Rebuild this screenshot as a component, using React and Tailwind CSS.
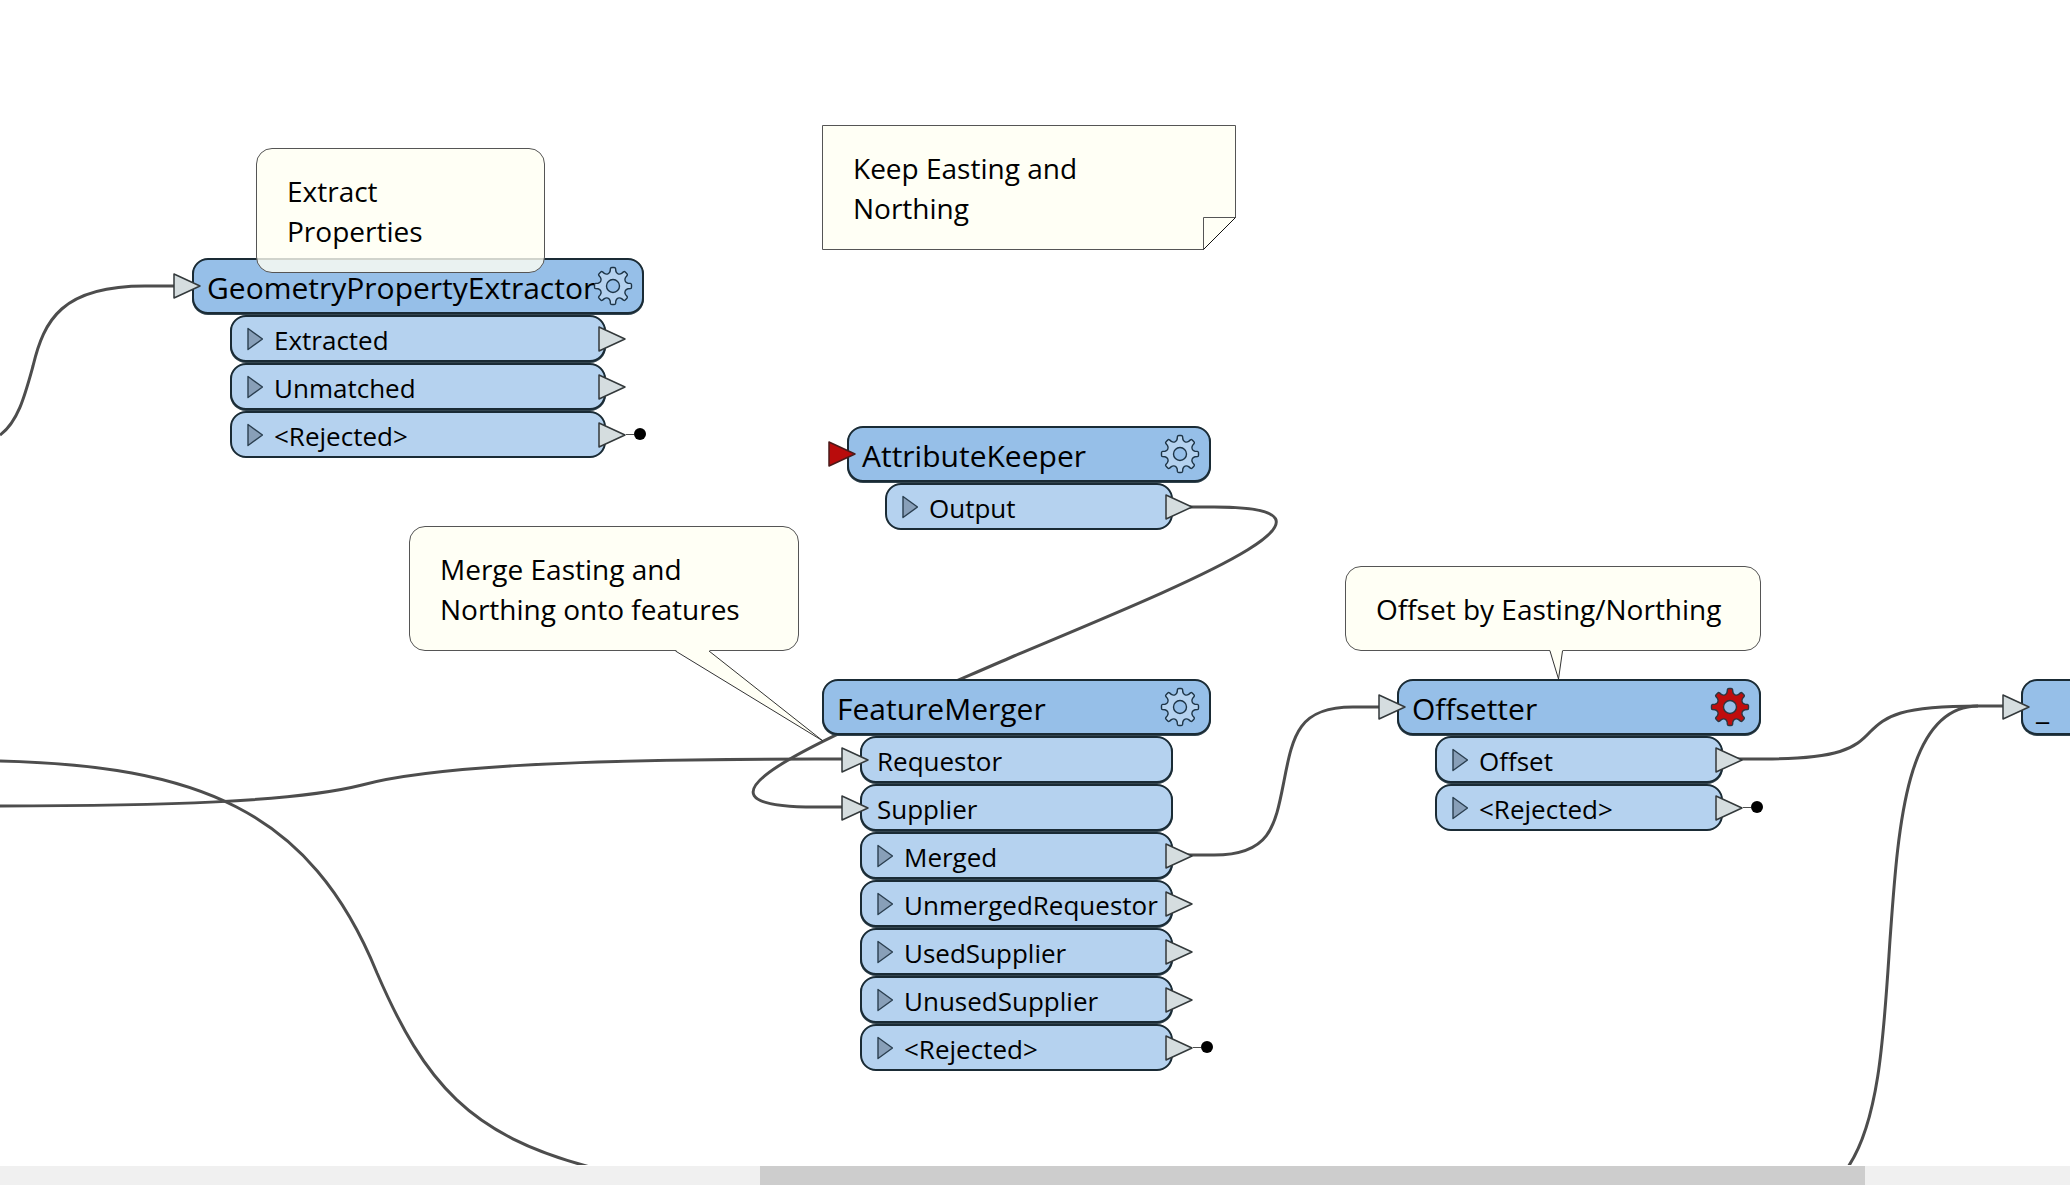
const WIRES = [
  "M0 435 C18 422 25 395 33 366 C44 320 62 286 145 286 H180",
  "M0 806 C160 806 295 802 362 785 C424 768 560 759 815 759 H850",
  "M0 761 C195 766 310 808 377 973 C425 1084 470 1135 590 1167",
  "M1185 507 H1214 C1380 507 1180 586 1014 656 C849 728 650 807 815 807 H850",
  "M1185 855 H1214 C1270 855 1275 827 1284 781 C1293 734 1299 707 1353 707 H1390",
  "M1735 759 H1764 C1840 759 1855 748 1870 732 C1886 716 1900 706 1978 706 H2010",
  "M1848 1167 C1880 1120 1884 1030 1890 940 C1898 830 1905 706 1978 706",
];

const NODES = [
  {
    name: "GeometryPropertyExtractor",
    place: "left-[192px] top-[258px] w-[452px]",
    input: "idle",
    ports: [
      { name: "Extracted", out: true },
      { name: "Unmatched", out: true },
      { name: "<Rejected>", out: true, stop: true },
    ],
  },
  {
    name: "AttributeKeeper",
    place: "left-[847px] top-[426px] w-[364px]",
    input: "missing",
    ports: [{ name: "Output", out: true }],
  },
  {
    name: "FeatureMerger",
    place: "left-[822px] top-[679px] w-[389px]",
    ports: [
      { name: "Requestor" },
      { name: "Supplier" },
      { name: "Merged", out: true },
      { name: "UnmergedRequestor", out: true },
      { name: "UsedSupplier", out: true },
      { name: "UnusedSupplier", out: true },
      { name: "<Rejected>", out: true, stop: true },
    ],
  },
  {
    name: "Offsetter",
    place: "left-[1397px] top-[679px] w-[364px]",
    input: "idle",
    alert: true,
    ports: [
      { name: "Offset", out: true },
      { name: "<Rejected>", out: true, stop: true },
    ],
  },
  {
    name: "_",
    place: "left-[2021px] top-[679px] w-[364px]",
    input: "idle",
    ports: [],
  },
];

// one tooth per 45 degrees, starting from the top
function gearPath() {
  const at = (a, x, y) => {
    const px = 20 + x * Math.cos(a) - y * Math.sin(a);
    const py = 20 + x * Math.sin(a) + y * Math.cos(a);
    return `${px.toFixed(2)} ${py.toFixed(2)}`;
  };
  let d = "";
  for (let i = 0; i < 8; i++) {
    const a = (i * Math.PI) / 4;
    const next = a + Math.PI / 4;
    d += `${i ? "L" : "M"}${at(a, -2.8, -15)} L${at(a, -2.6, -17.4)} Q${at(a, -2.4, -18.5)} ${at(a, -1.2, -18.5)} `;
    d += `L${at(a, 1.2, -18.5)} Q${at(a, 2.4, -18.5)} ${at(a, 2.6, -17.4)} L${at(a, 2.8, -15)} `;
    d += `C${at(a, 3.4, -12.2)} ${at(next, -3.4, -12.2)} ${at(next, -2.8, -15)} `;
  }
  return d + "Z";
}

const GEAR = gearPath();

function Gear({ alert }) {
  return (
    <svg viewBox="0 0 40 40" className="h-10 w-10" aria-hidden="true">
      <path
        d={`${GEAR} M26.5 20 A6.5 6.5 0 1 0 13.5 20 A6.5 6.5 0 1 0 26.5 20 Z`}
        fill={alert ? "#c00d0d" : "#b5d2ef"}
        fillRule="evenodd"
        stroke={alert ? "#2e3540" : "#1d3446"}
        strokeWidth="1.4"
        strokeLinejoin="round"
      />
    </svg>
  );
}

function PortArrow({ className, missing }) {
  return (
    <svg
      viewBox="0 0 28 26"
      className={`absolute h-[26px] w-7 ${className}`}
      aria-hidden="true"
    >
      <path
        d="M1 1 L27 13 L1 25 Z"
        fill={missing ? "#b90c0c" : "#d5dddf"}
        stroke={missing ? "#4a1a1a" : "#33393b"}
        strokeWidth="1.5"
        strokeLinejoin="round"
      />
    </svg>
  );
}

function Port({ port }) {
  return (
    <li className="relative flex h-[47px] items-center rounded-2xl border-2 border-[#1a2b35] bg-[#b5d2ef] not-last:shadow-[0_1px_0_#33454f]">
      {port.out ? (
        <button
          type="button"
          aria-label={`Expand ${port.name}`}
          className="ml-[15px] mr-[11px] h-6 w-4"
        >
          <svg viewBox="0 0 16 24" className="h-6 w-4" aria-hidden="true">
            <path
              d="M1 1.5 L15.5 12 L1 22.5 Z"
              fill="#889fb8"
              stroke="#2b3f50"
              strokeWidth="1.4"
              strokeLinejoin="round"
            />
          </svg>
        </button>
      ) : (
        <PortArrow className="-left-[21px] top-[9px]" />
      )}
      <span
        className={`whitespace-nowrap pt-[3px] text-[26px] leading-9 ${
          port.out ? "" : "ml-[15px]"
        }`}
      >
        {port.name}
      </span>
      {port.out && <PortArrow className="-right-[22px] top-[9px]" />}
      {port.stop && (
        <span className="absolute -right-[42px] top-[15px] flex h-3 w-5 items-center">
          <span className="h-px flex-1 bg-[#4d4d4d]" />
          <span className="h-3 w-3 rounded-full bg-black" />
        </span>
      )}
    </li>
  );
}

function Node({ node }) {
  return (
    <section className={`absolute ${node.place}`}>
      <header className="relative flex h-14 items-center justify-between rounded-2xl border-2 border-[#1a2b35] bg-[#96bfe8] pl-[13px] pr-[9px] shadow-[0_1px_0_#33454f]">
        {node.input && (
          <PortArrow
            missing={node.input === "missing"}
            className="-left-[21px] top-[13px]"
          />
        )}
        <h2 className="whitespace-nowrap pt-[3px] text-[30px] leading-10">
          {node.name}
        </h2>
        <button
          type="button"
          aria-label={`${node.name} parameters`}
          className="-ml-1 h-10 w-10 shrink-0"
        >
          <Gear alert={node.alert} />
        </button>
      </header>
      <ul className="mx-[38px] mt-px flex flex-col gap-px">
        {node.ports.map((port) => (
          <Port key={port.name} port={port} />
        ))}
      </ul>
    </section>
  );
}

function Note({ className, tail, children }) {
  return (
    <div
      className={`absolute rounded-2xl border border-[#555555] bg-[#fffff2]/80 px-[30px] pb-[21px] pt-[22px] text-[28px] leading-10 ${className}`}
    >
      {children}
      {tail}
    </div>
  );
}

function FoldedNote() {
  return (
    <div className="absolute left-[822px] top-[125px] w-[414px] px-[31px] pb-[22px] pt-[23px] text-[28px] leading-10">
      <svg
        viewBox="0 0 414 125"
        className="absolute inset-0 -z-10 h-full w-full"
        fill="#fffff5"
        stroke="#555555"
        aria-hidden="true"
      >
        <path d="M0.5 0.5 H413.5 V92.5 L381.5 124.5 H0.5 Z" />
        <path d="M381.5 124.5 V92.5 H413.5" />
        <path d="M381.5 124.5 L413.5 92.5" stroke="#111111" />
      </svg>
      Keep Easting and
      <br />
      Northing
    </div>
  );
}

export default function App() {
  return (
    <div className="flex h-screen flex-col bg-white font-['Open_Sans','Noto_Sans',sans-serif] text-black">
      <main className="relative isolate flex-1 overflow-hidden">
        <svg
          className="absolute left-0 top-0 h-full w-full"
          fill="none"
          stroke="#4d4d4d"
          strokeWidth="3"
          aria-hidden="true"
        >
          {WIRES.map((d) => (
            <path key={d} d={d} />
          ))}
        </svg>

        {NODES.map((node) => (
          <Node key={node.name} node={node} />
        ))}

        <Note className="left-[256px] top-[148px] w-[289px]">
          Extract
          <br />
          Properties
        </Note>
        <FoldedNote />
        <Note
          className="left-[409px] top-[526px] w-[390px]"
          tail={
            <svg
              viewBox="0 0 150 92"
              className="absolute left-[265px] top-[123px] h-[92px] w-[150px]"
              aria-hidden="true"
            >
              <path d="M0.5 0 L148 91 L34 0 Z" fill="#fffff5" />
              <path d="M0.5 1 L148 91 L34 1" fill="none" stroke="#333333" />
            </svg>
          }
        >
          Merge Easting and
          <br />
          Northing onto features
        </Note>
        <Note
          className="left-[1345px] top-[566px] w-[416px]"
          tail={
            <svg
              viewBox="0 0 14 30"
              className="absolute left-[203px] top-[83px] h-[30px] w-3.5"
              aria-hidden="true"
            >
              <path d="M1 0 L9.5 29 L13.5 0 Z" fill="#fffff5" />
              <path d="M1 1 L9.5 29 L13.5 1" fill="none" stroke="#333333" />
            </svg>
          }
        >
          Offset by Easting/Northing
        </Note>
      </main>

      <div
        role="scrollbar"
        aria-label="Horizontal scroll"
        aria-orientation="horizontal"
        aria-controls="root"
        aria-valuenow={79}
        className="flex h-5 shrink-0 border-t border-white bg-[#f0f0f0]"
      >
        <div className="ml-[36.7%] w-[53.4%] bg-[#cdcdcd]" />
      </div>
    </div>
  );
}
